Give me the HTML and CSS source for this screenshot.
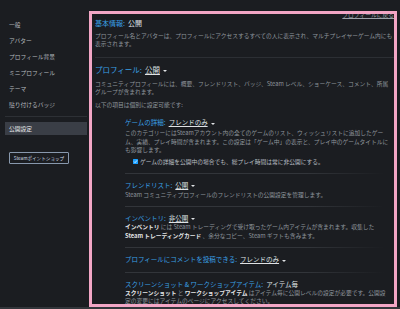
FILE: index.html
```html
<!DOCTYPE html>
<html lang="ja">
<head>
<meta charset="utf-8">
<title>公開設定</title>
<link rel="stylesheet" href="styles.css">
</head>
<body>
<div class="page">
  <div class="layout">
    <nav class="sidebar">
      <ul class="nav-list">
        <li class="nav-item">一般</li>
        <li class="nav-item">アバター</li>
        <li class="nav-item">プロフィール背景</li>
        <li class="nav-item">ミニプロフィール</li>
        <li class="nav-item">テーマ</li>
        <li class="nav-item">貼り付けるバッジ</li>
      </ul>
      <div class="nav-divider"></div>
      <div class="nav-active">公開設定</div>
      <div class="shop-btn">Steamポイントショップ</div>
    </nav>
    <main class="main">
      <div class="back-row"><span class="back-link">プロフィールに戻る</span></div>
      <h2 class="basic-heading"><span class="label">基本情報:</span><span class="value">公開</span></h2>
      <p class="desc desc--basic">プロフィール名とアバターは、プロフィールにアクセスするすべての人に表示され、マルチプレイヤーゲーム内にも<br>表示されます。</p>
      <div class="divider"></div>
      <h1 class="profile-heading"><span class="label">プロフィール:</span><span class="value value--link">公開</span><span class="caret"></span></h1>
      <p class="desc desc--profile">コミュニティプロフィールには、概要、フレンドリスト、バッジ、Steam レベル、ショーケース、コメント、所属<br>グループが含まれます。</p>
      <p class="desc desc--note">以下の項目は個別に設定可能です:</p>

      <div class="subsections">
        <section class="sub sub--first">
          <h3 class="sub-heading"><span class="label">ゲームの詳細:</span><span class="value value--link">フレンドのみ</span><span class="caret"></span></h3>
          <p class="desc sub-desc sub-desc--game">このカテゴリーにはSteamアカウント内の全てのゲームのリスト、ウィッシュリストに追加したゲー<br>ム、実績、プレイ時間が含まれます。この設定は「ゲーム中」の表示と、プレイ中のゲームタイトルに<br>も影響します。</p>
          <div class="check-row">
            <span class="checkbox"><svg viewBox="0 0 6 6" width="5" height="5"><path d="M1.2 3.1 L2.5 4.4 L4.9 1.6" fill="none" stroke="#fff" stroke-width="0.9"/></svg></span>
            <span class="check-text">ゲームの詳細を公開中の場合でも、総プレイ時間は常に非公開にする。</span>
          </div>
        </section>
        <section class="sub">
          <h3 class="sub-heading"><span class="label">フレンドリスト:</span><span class="value value--link">公開</span><span class="caret"></span></h3>
          <p class="desc sub-desc">Steam コミュニティプロフィールのフレンドリストの公開設定を管理します。</p>
        </section>
        <section class="sub">
          <h3 class="sub-heading"><span class="label">インベントリ:</span><span class="value value--link">非公開</span><span class="caret"></span></h3>
          <p class="desc sub-desc"><b class="em">インベントリ</b> には Steam トレーディングで受け取ったゲーム内アイテムが含まれます。収集した<br><b class="em">Steam トレーディングカード</b> 、余分なコピー、Steam ギフトも含みます。</p>
        </section>
        <section class="sub">
          <h3 class="sub-heading"><span class="label">プロフィールにコメントを投稿できる:</span><span class="value value--link">フレンドのみ</span><span class="caret"></span></h3>
        </section>
        <section class="sub">
          <h3 class="sub-heading"><span class="label">スクリーンショット &amp; ワークショップアイテム:</span><span class="value">アイテム毎</span></h3>
          <p class="desc sub-desc"><b class="em">スクリーンショット</b> と <b class="em">ワークショップアイテム</b> はアイテム毎に公開レベルの設定が必要です。公開設<br>定の変更にはアイテムのページにアクセスしてください。</p>
        </section>
      </div>
    </main>
  </div>
  <div class="footer"></div>
  <div class="highlight"></div>
</div>
</body>
</html>
```

FILE: styles.css
```css
* { box-sizing: border-box; }

html, body {
  margin: 0;
  padding: 0;
  width: 400px;
  height: 309px;
  overflow: hidden;
  background: #1b1d21;
  font-family: "Noto Sans CJK JP", "Noto Sans", sans-serif;
  color: #8f969d;
}

.page {
  position: relative;
  width: 400px;
  height: 309px;
  display: flex;
  flex-direction: column;
}

.layout {
  flex: 1;
  display: flex;
  overflow: hidden;
}

/* Sidebar */
.sidebar {
  width: 89px;
  flex: none;
  padding: 17px 2px 0 5px;
}

.nav-list {
  list-style: none;
  margin: 0;
  padding: 0;
}

.nav-item {
  height: 16px;
  line-height: 16px;
  padding-left: 4px;
  font-size: 5.75px;
  color: #b4b9be;
  white-space: nowrap;
}

.nav-divider {
  margin-top: 3px;
  height: 1px;
  background: #2d3035;
}

.nav-active {
  margin-top: 5px;
  height: 13px;
  line-height: 13px;
  padding-left: 4px;
  background: #3a3e46;
  color: #e6e8ea;
  font-size: 5.75px;
  white-space: nowrap;
}

.shop-btn {
  margin: 17px 0 0 4px;
  width: 60px;
  height: 12px;
  border: 1px solid #8898ad;
  border-radius: 1px;
  line-height: 10px;
  text-align: center;
  font-size: 4.6px;
  color: #cfdbe6;
  white-space: nowrap;
}

/* Main */
.main {
  flex: 1;
  min-width: 0;
  padding: 10px 6px 0 6px;
  white-space: nowrap;
}

.back-row {
  display: flex;
  justify-content: flex-end;
  height: 9px;
  line-height: 9px;
}

.back-link {
  font-size: 5.75px;
  color: #9aa1a8;
  text-decoration: underline;
}

h1, h2, h3, p { margin: 0; font-weight: normal; }

.label { color: #3aa0e6; }
.value { color: #dfe2e4; margin-left: 3px; }
.value--link { text-decoration: underline; text-underline-offset: 1px; }

.caret {
  display: inline-block;
  margin-left: 3px;
  width: 0;
  height: 0;
  border-left: 2px solid transparent;
  border-right: 2px solid transparent;
  border-top: 2.5px solid #dfe2e4;
  vertical-align: middle;
}

.basic-heading {
  font-size: 7px;
  height: 9px;
  line-height: 9px;
}

.profile-heading {
  margin-top: 6.6px;
  font-size: 7.5px;
  height: 11px;
  line-height: 11px;
}

.desc {
  font-size: 5.75px;
  line-height: 8.3px;
  color: #8f969d;
}

.desc--basic { margin-top: 3.5px; }
.desc--profile { margin-top: 5px; }
.desc--note { margin-top: 4.4px; }

.em { color: #e4e6e8; font-weight: bold; }

.divider {
  margin-top: 8.5px;
  height: 1px;
  background: #2c2f34;
}

/* Sub sections */
.subsections {
  margin-left: 30px;
  margin-right: 10px;
}

.sub {
  padding: 7px 0 7.3px;
  background-image: linear-gradient(to right, #32353a 0%, #32353a 70%, rgba(50,53,58,0) 100%);
  background-size: 100% 1px;
  background-repeat: no-repeat;
  background-position: top left;
}

.sub--first {
  margin-top: 8px;
  padding-top: 0;
  background-image: none;
}

.sub-heading {
  font-size: 6.5px;
  height: 10px;
  line-height: 10px;
}

.sub-desc { margin-top: 0.3px; }
.sub-desc--game { margin-top: 1.8px; }

.check-row {
  margin-top: 3.5px;
  height: 8.3px;
  display: flex;
  align-items: center;
  padding-left: 8px;
}

.checkbox {
  width: 5px;
  height: 5px;
  background: #1a9fff;
  border-radius: 0.5px;
  display: flex;
  align-items: center;
  justify-content: center;
  flex: none;
}

.checkbox svg { display: block; }

.check-text {
  margin-left: 2px;
  font-size: 5.75px;
  color: #b9bec3;
}

/* Footer strip */
.footer {
  height: 2px;
  flex: none;
  background: #33363b;
}

/* Annotation overlay */
.highlight {
  position: absolute;
  left: 89px;
  top: 11px;
  width: 308px;
  height: 296px;
  border: 3px solid #f2a6c5;
  pointer-events: none;
}
```
